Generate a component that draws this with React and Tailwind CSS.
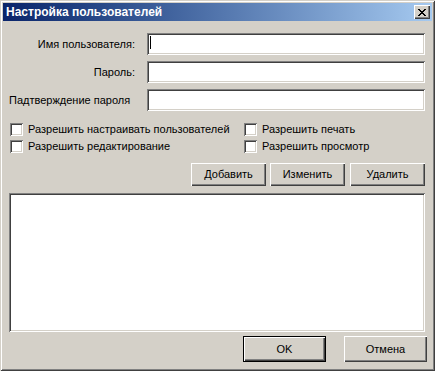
import React from 'react';

const raised = 'shadow-[inset_1px_1px_#ffffff,inset_-1px_-1px_#404040,inset_-2px_-2px_#808080]';
const sunken = 'shadow-[inset_1px_1px_#808080,inset_-1px_-1px_#ffffff,inset_2px_2px_#404040,inset_-2px_-2px_#d4d0c8]';

function Field({ label, align = 'right', caret = false }) {
  return (
    <>
      <span className={align === 'right' ? 'text-right' : 'text-left'}>{label}</span>
      <div className={`relative h-[22px] bg-white ${sunken}`}>
        {caret && <span className="absolute left-[3px] top-[3px] h-[13px] w-px bg-black" />}
      </div>
    </>
  );
}

function Check({ label }) {
  return (
    <label className="flex h-[13px] items-center gap-[5px] whitespace-nowrap">
      <span className={`block h-[13px] w-[13px] shrink-0 bg-white ${sunken}`} />
      <span>{label}</span>
    </label>
  );
}

function Btn({ children, className = '' }) {
  return (
    <button className={`flex items-center justify-center bg-[#d4d0c8] ${raised} ${className}`}>
      {children}
    </button>
  );
}

export default function App() {
  return (
    <div
      className="flex h-[371px] w-[435px] flex-col bg-[#d4d0c8] p-[3px] text-[11px] leading-none text-black shadow-[inset_1px_1px_#d4d0c8,inset_-1px_-1px_#404040,inset_2px_2px_#ffffff,inset_-2px_-2px_#808080]"
      style={{ fontFamily: '"Liberation Sans", "DejaVu Sans", sans-serif' }}
    >
      <div className="flex h-[18px] items-center justify-between bg-gradient-to-r from-[#0a246a] to-[#a6caf0] pl-[3px] pr-[2px]">
        <span className="text-[12px] font-bold text-white">Настройка пользователей</span>
        <button className={`flex h-[14px] w-[16px] items-center justify-center bg-[#d4d0c8] ${raised}`}>
          <svg width="8" height="7" viewBox="0 0 8 7" shapeRendering="crispEdges">
            <path d="M0 0h2v1H0zM6 0h2v1H6zM1 1h2v1H1zM5 1h2v1H5zM2 2h4v1H2zM3 3h2v1H3zM2 4h4v1H2zM1 5h2v1H1zM5 5h2v1H5zM0 6h2v1H0zM6 6h2v1H6z" fill="#000" />
          </svg>
        </button>
      </div>

      <div className="mt-[12px] ml-[6px] grid grid-cols-[126px_278px] items-center gap-x-[12px] gap-y-[6px]">
        <Field label="Имя пользователя:" caret />
        <Field label="Пароль:" />
        <Field label="Падтверждение пароля" align="left" />
      </div>

      <div className="mt-[12px] ml-[7px] grid grid-cols-[234px_auto] gap-y-[4px]">
        <Check label="Разрешить настраивать пользователей" />
        <Check label="Разрешить печать" />
        <Check label="Разрешить редактирование" />
        <Check label="Разрешить просмотр" />
      </div>

      <div className="mt-[10px] mr-[7px] flex justify-end gap-[4px]">
        <Btn className="h-[23px] w-[75px]">Добавить</Btn>
        <Btn className="h-[23px] w-[75px]">Изменить</Btn>
        <Btn className="ml-px h-[23px] w-[75px]">Удалить</Btn>
      </div>

      <div className={`mt-[7px] ml-[6px] h-[139px] w-[416px] bg-white ${sunken}`} />

      <div className="mt-[4px] mr-[5px] flex justify-end gap-[18px]">
        <div className="border border-black">
          <Btn className="h-[24px] w-[81px]">OK</Btn>
        </div>
        <Btn className="h-[26px] w-[83px]">Отмена</Btn>
      </div>
    </div>
  );
}
